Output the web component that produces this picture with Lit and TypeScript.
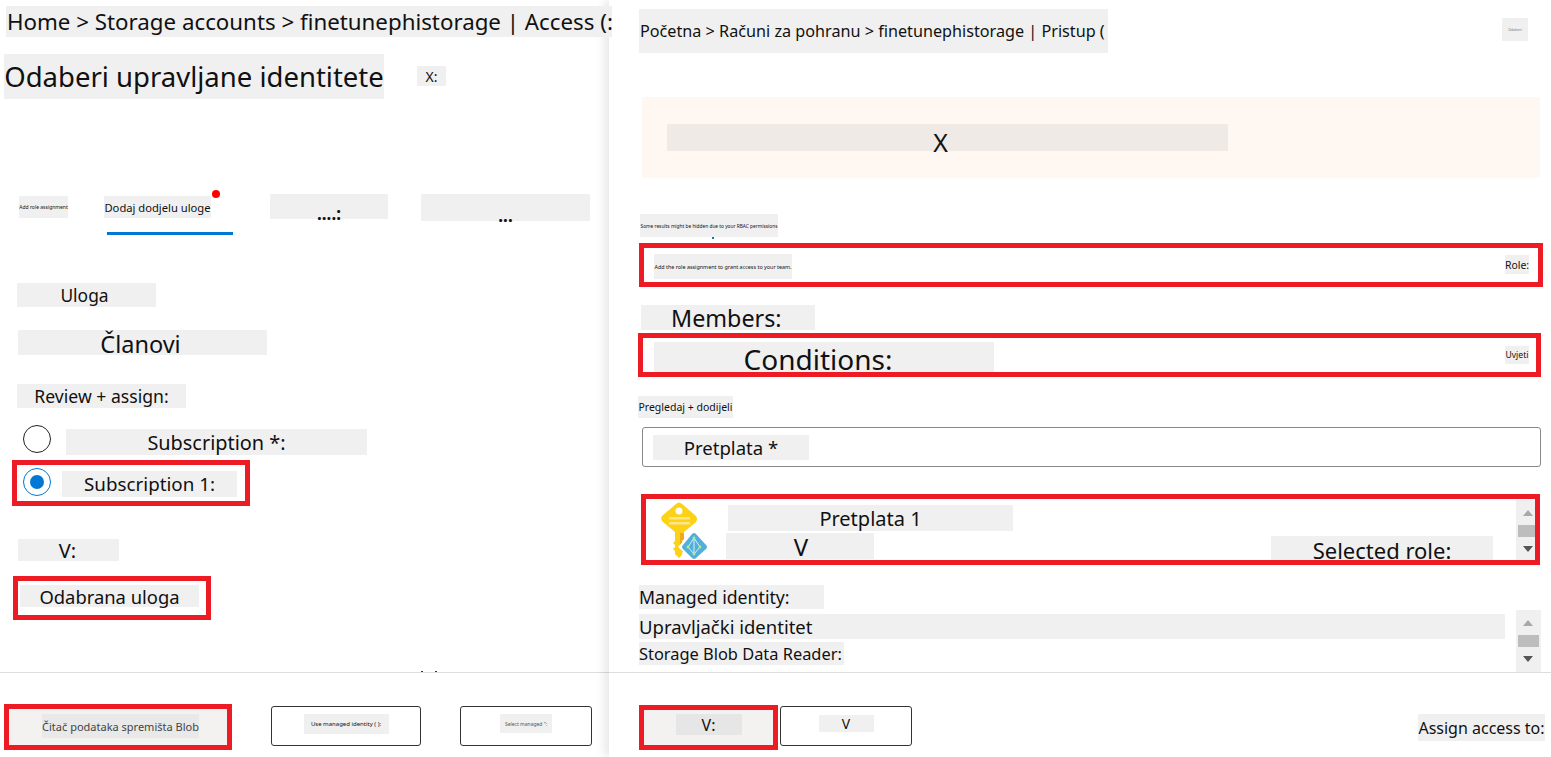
import { LitElement, css, html } from 'lit'
import { customElement } from 'lit/decorators.js'

@customElement('app-root')
export class AppRoot extends LitElement {

  static get styles() {
    return css`
      :host {
        display: block;
        width: 1551px;
        height: 757px;
        overflow: hidden;
        background: #fff;
        color: #111;
        font-family: "Noto Sans", "Open Sans", sans-serif;
      }
      .page {
        display: grid;
        grid-template-columns: 609px 942px;
        height: 757px;
      }
      .left, .right {
        display: flex;
        flex-direction: column;
        background: #fff;
      }
      .right {
        position: relative;
        z-index: 1;
        box-shadow: -5px 0 9px rgba(0, 0, 0, .09);
      }
      .main {
        height: 672px;
        flex: none;
      }
      .footer {
        position: relative;
        display: flex;
        align-items: flex-start;
        height: 85px;
        box-sizing: border-box;
        border-top: 1px solid #ddd;
      }
      .patch {
        display: flex;
        align-items: center;
        justify-content: center;
        box-sizing: border-box;
        flex: none;
        white-space: nowrap;
        background: #f0f0f0;
      }
      .start { justify-content: flex-start; }
      .row { display: flex; align-items: flex-start; }
      .red {
        display: flex;
        align-items: flex-start;
        box-sizing: border-box;
        flex: none;
        border: 5px solid #ed1c24;
      }

      /* left panel */
      .l-crumb {
        position: relative;
        z-index: 2;
        width: 606px;
        height: 31px;
        margin: 6px 0 0 6px;
        padding-left: 1px;
        font-size: 22.3px;
      }
      .l-title-row { margin: 17px 0 0 4px; }
      .l-title { width: 380px; height: 45px; font-size: 27.5px; }
      .l-x { width: 29px; height: 20px; margin: 12px 0 0 33px; font-size: 14px; }
      .tabs { height: 41px; margin-top: 95px; }
      .tab-a { width: 49px; height: 22px; margin: 2px 0 0 19px; font-size: 5px; }
      .tab-b { position: relative; width: 129px; margin: 0 0 0 36px; }
      .tab-b-label { width: 107px; height: 22px; margin-top: 2px; font-size: 11.2px; }
      .tab-dot {
        position: absolute;
        top: -4px;
        left: 108px;
        width: 8px;
        height: 8px;
        border-radius: 50%;
        background: #f00;
      }
      .tab-line { width: 126px; height: 3px; margin: 14px 0 0 3px; background: #0078d4; }
      .tab-c { width: 118px; height: 25px; margin-left: 37px; padding-top: 14px; font-size: 17px; font-weight: 700; }
      .tab-d { width: 169px; height: 27px; margin-left: 33px; padding-top: 16px; font-size: 17px; font-weight: 700; }
      .l-role { width: 139px; height: 24px; margin: 48px 0 0 17px; padding-right: 4px; font-size: 17.4px; }
      .l-members { width: 249px; height: 25px; margin: 23px 0 0 18px; padding: 3px 4px 0 0; font-size: 23.5px; }
      .l-review { width: 169px; height: 24px; margin: 29px 0 0 17px; font-size: 17.6px; }
      .radio {
        width: 28px;
        height: 28px;
        flex: none;
        box-sizing: border-box;
        border: 1px solid #222;
        border-radius: 50%;
      }
      .radio.on {
        display: flex;
        align-items: center;
        justify-content: center;
        border-color: #0078d4;
      }
      .radio.on::after {
        content: "";
        width: 14px;
        height: 14px;
        border-radius: 50%;
        background: #0078d4;
      }
      .l-sub-row { height: 30px; margin: 17px 0 0 23px; }
      .l-sub { width: 301px; height: 26px; margin: 4px 0 0 15px; font-size: 19.9px; }
      .l-red-sub { width: 238px; height: 46px; margin: 5px 0 0 12px; padding: 3px 0 0 6px; }
      .l-sub1 { width: 175px; height: 26px; margin: 3px 0 0 11px; font-size: 18.8px; }
      .l-v { width: 101px; height: 22px; margin: 33px 0 0 18px; padding-right: 2px; font-size: 20px; }
      .l-red-role { width: 198px; height: 44px; margin: 15px 0 0 13px; padding: 4px 0 0 2px; }
      .l-role-pick { width: 179px; height: 22px; font-size: 18.4px; }
      .l-footer { padding-top: 31px; }
      .divider-mark { position: absolute; top: -2px; width: 2px; height: 1px; background: #333; }
      .divider-mark.a { left: 421px; }
      .divider-mark.b { left: 435px; }
      .l-red-btn {
        width: 228px;
        height: 46px;
        margin-left: 4px;
        padding: 5px 0 0 33px;
        background: #f3f2f1;
      }
      .l-btn-label { width: 157px; height: 24px; background: #e9e9e9; color: #444; font-size: 11px; }
      .btn {
        display: flex;
        justify-content: center;
        box-sizing: border-box;
        flex: none;
        height: 40px;
        border: 1px solid #333;
        border-radius: 3px;
      }
      .btn-b { width: 150px; margin: 2px 0 0 39px; padding-top: 7px; }
      .btn-b .patch { width: 85px; height: 20px; font-size: 6px; }
      .btn-c { width: 132px; margin: 2px 0 0 39px; padding-top: 7px; }
      .btn-c .patch { width: 52px; height: 19px; font-size: 5px; color: #555; }

      /* right panel */
      .r-head { height: 44px; margin: 9px 23px 0 30px; justify-content: space-between; }
      .r-crumb { width: 469px; height: 44px; padding-left: 1px; font-size: 16.2px; }
      .r-tiny { width: 26px; height: 23px; margin-top: 9px; font-size: 3.6px; color: #777; }
      .banner {
        box-sizing: border-box;
        width: 898px;
        height: 81px;
        margin: 44px 0 0 33px;
        padding: 27px 0 0 25px;
        border-radius: 2px;
        background: #fff8f2;
      }
      .banner-text {
        width: 561px;
        height: 27px;
        padding: 8px 14px 0 0;
        background: #efeae5;
        font-size: 25px;
      }
      .r-note { width: 138px; height: 23px; margin: 36px 0 0 31px; font-size: 4.8px; }
      .r-mark { width: 2px; height: 2px; margin-left: 103px; background: #2a6ea8; }
      .r-red-a { width: 904px; height: 44px; margin: 4px 0 0 30px; padding: 6px 9px 0 10px; justify-content: space-between; }
      .r-red-a-text { width: 138px; height: 25px; font-size: 5.4px; }
      .r-role { width: 24px; height: 19px; margin-top: 1px; font-size: 10.4px; }
      .r-members { width: 174px; height: 25px; margin: 18px 0 0 32px; padding-left: 30px; font-size: 23.3px; justify-content: flex-start; }
      .r-red-b { width: 903px; height: 44px; margin: 3px 0 0 29px; padding: 4px 7px 0 11px; justify-content: space-between; }
      .r-cond { width: 340px; height: 30px; padding: 4px 12px 0 0; font-size: 28px; }
      .r-uvjeti { width: 24px; height: 18px; margin-top: 4px; font-size: 8.6px; }
      .r-review { width: 95px; height: 22px; margin: 19px 0 0 29px; font-size: 10.5px; }
      .r-input {
        box-sizing: border-box;
        width: 899px;
        height: 40px;
        margin: 9px 0 0 33px;
        padding: 7px 0 0 10px;
        border: 1px solid #8a8886;
        border-radius: 3px;
      }
      .r-input .patch { width: 156px; height: 25px; font-size: 18.6px; }
      .r-red-c { width: 899px; height: 71px; margin: 27px 0 0 32px; }
      .key { flex: none; width: 50px; height: 59px; margin: 2px 0 0 14px; }
      .r-sub-col { flex: none; width: 287px; margin-left: 16px; }
      .r-sub1 { width: 285px; height: 26px; margin: 6px 0 0 2px; font-size: 20px; }
      .r-sub-v { width: 148px; height: 26px; margin-top: 2px; padding-left: 2px; font-size: 24px; }
      .r-selected { width: 222px; height: 24px; margin: 37px 0 0 258px; padding-top: 3px; font-size: 22px; }
      .sb {
        flex: none;
        overflow: hidden;
        display: flex;
        flex-direction: column;
        box-sizing: border-box;
        padding-top: 10px;
        background: #f0f0f0;
      }
      .sb-up {
        width: 0;
        margin-left: 7px;
        border: solid transparent;
        border-width: 0 5.5px 6px;
        border-bottom-color: #a8a8a8;
      }
      .sb-thumb { flex: none; width: 21px; height: 12px; margin: 9px 0 0 2px; background: #bdbdbd; }
      .sb-down {
        width: 0;
        margin: 9px 0 0 7px;
        border: solid transparent;
        border-width: 6px 5.5px 0;
        border-top-color: #555;
      }
      .sb-a { width: 19px; height: 60px; margin: 1px 0 0 23px; }
      .sb-b { width: 25px; height: 62px; margin-left: 11px; }
      .r-managed { width: 185px; height: 24px; margin: 20px 0 0 30px; font-size: 17.7px; }
      .r-list-row { margin: 1px 0 0 30px; }
      .r-upr { width: 866px; height: 25px; margin-top: 4px; font-size: 18.5px; }
      .r-blob { width: 205px; height: 23px; margin-top: 3px; font-size: 16.4px; }
      .r-footer { padding-top: 32px; }
      .r-red-btn {
        display: flex;
        justify-content: center;
        width: 139px;
        height: 45px;
        margin-left: 30px;
        padding-top: 4px;
        background: #f3f2f1;
      }
      .r-red-btn .patch { width: 66px; height: 21px; background: #e6e6e6; font-size: 16px; }
      .r-btn { width: 132px; margin: 1px 0 0 2px; padding-top: 8px; }
      .r-btn .patch { width: 55px; height: 17px; font-size: 14px; }
      .r-assign { width: 127px; height: 27px; margin: 9px 6px 0 auto; font-size: 16px; }
    `
  }

  private _scrollbar(cls: string) {
    return html`
      <div class="sb ${cls}">
        <div class="sb-up"></div>
        <div class="sb-thumb"></div>
        <div class="sb-down"></div>
      </div>
    `
  }

  private _keyIcon() {
    return html`
      <svg class="key" viewBox="0 0 50 59">
        <path fill="#fcd116" d="M16 3 Q19 0 22 3 L36 15 Q38 18 36 21 L24 31 V38 L22 40 V44 L24 46 V50 L22 52 V54 L19 57 L15 53 V50 L13 48 L15 46 V44 L13 42 L15 40 V31 L3 21 Q0 18 2 15 Z" />
        <path fill="#f0a81e" d="M20 32 H24 V38 L22 40 V44 H20 Z" />
        <circle cx="19" cy="10" r="3.5" fill="#fff" />
        <rect x="9" y="16" width="21" height="2.5" fill="#ffe58a" />
        <rect x="9" y="21" width="21" height="2.5" fill="#ffe58a" />
        <path fill="#fff" d="M34 29 L50 46 L34 60 L18 46 Z" />
        <path fill="#50b0dc" d="M32 33 Q34 31 36 33 L46 44 Q48 46 46 48 L36 57 Q34 59 32 57 L23 48 Q21 46 23 44 Z" />
        <path fill="none" stroke="#d8f0f8" stroke-width="1" d="M34 37 V53 M34 37 L28 46 L34 53 L40 46 Z" />
        <circle cx="34" cy="37" r="1.4" fill="#b8e986" />
        <circle cx="28" cy="46" r="1.4" fill="#b8e986" />
        <circle cx="40" cy="46" r="1.4" fill="#b8e986" />
        <circle cx="34" cy="53" r="1.4" fill="#b8e986" />
      </svg>
    `
  }

  render() {
    return html`
      <div class="page">
        <section class="left">
          <div class="main">
            <div class="patch start l-crumb">Home &gt; Storage accounts &gt; finetunephistorage | Access (:</div>
            <div class="row l-title-row">
              <div class="patch l-title">Odaberi upravljane identitete</div>
              <div class="patch l-x">X:</div>
            </div>
            <div class="row tabs">
              <div class="patch tab-a">Add role assignment</div>
              <div class="tab-b">
                <div class="patch tab-b-label">Dodaj dodjelu uloge</div>
                <div class="tab-dot"></div>
                <div class="tab-line"></div>
              </div>
              <div class="patch tab-c">....:</div>
              <div class="patch tab-d">...</div>
            </div>
            <div class="patch l-role">Uloga</div>
            <div class="patch l-members">Članovi</div>
            <div class="patch l-review">Review + assign:</div>
            <div class="row l-sub-row">
              <div class="radio"></div>
              <div class="patch l-sub">Subscription *:</div>
            </div>
            <div class="red l-red-sub">
              <div class="radio on"></div>
              <div class="patch l-sub1">Subscription 1:</div>
            </div>
            <div class="patch l-v">V:</div>
            <div class="red l-red-role">
              <div class="patch l-role-pick">Odabrana uloga</div>
            </div>
          </div>
          <div class="footer l-footer">
            <div class="divider-mark a"></div>
            <div class="divider-mark b"></div>
            <div class="red l-red-btn">
              <div class="patch l-btn-label">Čitač podataka spremišta Blob</div>
            </div>
            <div class="btn btn-b"><div class="patch">Use managed identity ( ):</div></div>
            <div class="btn btn-c"><div class="patch">Select managed ":</div></div>
          </div>
        </section>

        <section class="right">
          <div class="main">
            <div class="row r-head">
              <div class="patch start r-crumb">Početna &gt; Računi za pohranu &gt; finetunephistorage | Pristup (</div>
              <div class="patch r-tiny">Odaberi</div>
            </div>
            <div class="banner">
              <div class="patch banner-text">X</div>
            </div>
            <div class="patch r-note">Some results might be hidden due to your RBAC permissions</div>
            <div class="r-mark"></div>
            <div class="red r-red-a">
              <div class="patch r-red-a-text">Add the role assignment to grant access to your team.</div>
              <div class="patch r-role">Role:</div>
            </div>
            <div class="patch r-members">Members:</div>
            <div class="red r-red-b">
              <div class="patch r-cond">Conditions:</div>
              <div class="patch r-uvjeti">Uvjeti</div>
            </div>
            <div class="patch r-review">Pregledaj + dodijeli</div>
            <div class="r-input">
              <div class="patch">Pretplata *</div>
            </div>
            <div class="red r-red-c">
              ${this._keyIcon()}
              <div class="r-sub-col">
                <div class="patch r-sub1">Pretplata 1</div>
                <div class="patch r-sub-v">V</div>
              </div>
              <div class="patch r-selected">Selected role:</div>
              ${this._scrollbar('sb-a')}
            </div>
            <div class="patch start r-managed">Managed identity:</div>
            <div class="row r-list-row">
              <div>
                <div class="patch start r-upr">Upravljački identitet</div>
                <div class="patch start r-blob">Storage Blob Data Reader:</div>
              </div>
              ${this._scrollbar('sb-b')}
            </div>
          </div>
          <div class="footer r-footer">
            <div class="red r-red-btn">
              <div class="patch">V:</div>
            </div>
            <div class="btn r-btn"><div class="patch">V</div></div>
            <div class="patch r-assign">Assign access to:</div>
          </div>
        </section>
      </div>
    `
  }
}
